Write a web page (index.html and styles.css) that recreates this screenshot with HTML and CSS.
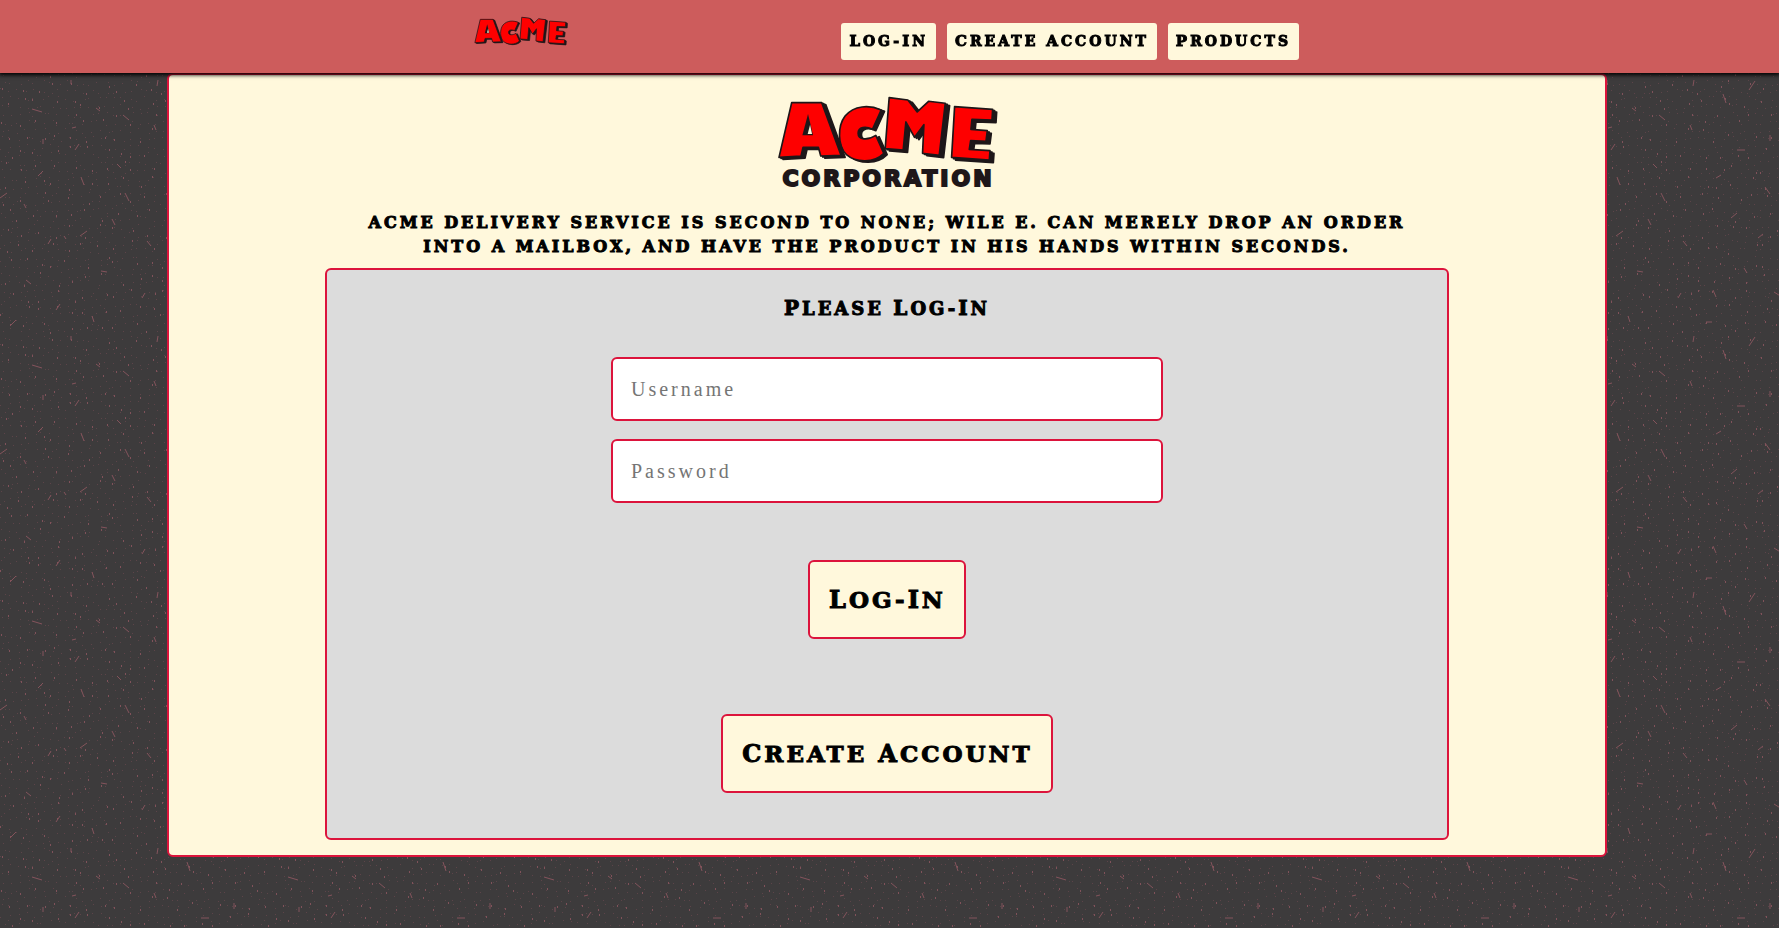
FILE: index.html
```
<!DOCTYPE html>
<html lang="en">
<head>
<meta charset="utf-8">
<title>ACME Corporation</title>
<link rel="stylesheet" href="styles.css">
</head>
<body>
<svg class="backdrop" aria-hidden="true">
  <defs>
    <pattern id="speckle" width="256" height="256" patternUnits="userSpaceOnUse">
      <path id="dim" fill="#5c4449"/>
      <path id="bright" fill="#80525a"/>
      <path fill="none" stroke="#84535b" stroke-width="1" d="M32 109l10 3M96 108l4 3M123 115l6 5M72 128l4-1M43 139v5M75 150l4-6M38 176l5-5M81 177l3 8M117 164l4 4M125 193l4 8M0 198l7-5M24 204l2 4M112 219l3 6M80 236l7-5M64 236l2 3M48 244l3-5M147 241l4 5M154 125l2 5M71 80v4M158 80l-1 6M187 94l3 9M213 90l6-9M177 34l3 7M238 36l8 5M201 150h8M229 187l5 7M195 218l6-5M234 135v6M26 24l5 4M101 15l6 1M60 48l-4 6M142 42l3-5M208 12l3 5M170 66h6M92 60l2 6M10 70l6-6M222 238l5-4M180 178l5-3M245 214l-2 7"/>
    </pattern>
    <path id="mark-c" d="M366 92L340 150C320 140 297 142 297 162C297 182 325 184 350 168L374 222C345 252 290 250 262 226C235 200 235 140 258 110C285 78 330 76 366 92Z"/>
    <path id="mark-a" d="M98 70H188L246 228L185 230L178 204H132L126 230L60 234Z"/>
    <path id="mark-m" d="M390 55L446 62L474 98L508 66L558 72L540 228L490 222L494 136L466 174L440 128L432 212L378 208Z"/>
    <path id="mark-e" d="M586 82L700 90L698 122L638 120L635 150L684 154L680 186L634 184L630 210L692 214L690 242L577 234Z"/>
    <symbol id="acme" viewBox="54 48 662 208">
      <g stroke="#1e1719" stroke-width="5" stroke-linejoin="round">
        <use href="#mark-c" fill="#1e1719" transform="translate(10 4)"/>
        <use href="#mark-c" fill="#fe0000"/>
        <g fill="#1e1719">
          <use href="#mark-a" transform="translate(6 3)"/>
          <use href="#mark-a" transform="translate(12 6)"/>
        </g>
        <use href="#mark-a" fill="#fe0000"/>
        <path d="M147 104L162 168H130Z" fill="#1e1719" stroke="none"/>
        <path d="M153 136L159 164H146Z" fill="#fff8dc" stroke="none"/>
        <g fill="#1e1719">
          <use href="#mark-m" transform="translate(6 3)"/>
          <use href="#mark-m" transform="translate(13 7)"/>
        </g>
        <use href="#mark-m" fill="#fe0000"/>
        <g fill="#1e1719">
          <use href="#mark-e" transform="translate(6 4)"/>
          <use href="#mark-e" transform="translate(12 8)"/>
        </g>
        <use href="#mark-e" fill="#fe0000"/>
      </g>
    </symbol>
  </defs>
  <rect width="100%" height="100%" fill="url(#speckle)"/>
</svg>

<header class="topbar">
  <a class="brand" href="#" aria-label="ACME home"><svg class="brand-mark"><use href="#acme"/></svg></a>
  <nav class="links">
    <a href="#"><b>L</b>og-<b>I</b>n</a>
    <a href="#"><b>C</b>reate <b>A</b>ccount</a>
    <a href="#"><b>P</b>roducts</a>
  </nav>
</header>

<main class="page">
  <div class="card">
    <div class="logo">
      <svg class="logo-mark"><use href="#acme"/></svg>
      <div class="logo-name">Corporation</div>
    </div>
    <p class="tagline">ACME delivery service is second to none; Wile E. can merely drop an order into a mailbox, and have the product in his hands within seconds.</p>
    <form class="login">
      <h1><b>P</b>lease <b>L</b>og-<b>I</b>n</h1>
      <input type="text" placeholder="Username" aria-label="Username">
      <input type="password" placeholder="Password" aria-label="Password">
      <button type="button" class="submit"><b>L</b>og-<b>I</b>n</button>
      <button type="button" class="create"><b>C</b>reate <b>A</b>ccount</button>
    </form>
  </div>
</main>
<script src="speckle.js"></script>
</body>
</html>
```
FILE: styles.css
```
* { box-sizing: border-box; }
body {
  margin: 0;
  background: #3d3b3c;
  color: #000;
  font-family: "DejaVu Serif", serif;
  font-weight: bold;
  letter-spacing: 3px;
}
.backdrop { position: fixed; inset: 0; width: 100%; height: 100%; z-index: -1; }

.topbar {
  position: relative;
  display: flex;
  justify-content: space-between;
  height: 73px;
  padding: 16px 480px 0 474px;
  background: #cd5c5c;
  box-shadow: 0 1px 4px 1px #000;
}
.brand-mark { display: block; width: 94px; height: 30px; }
.links { display: flex; gap: 11px; padding-top: 7px; align-items: flex-start; }
.links a {
  padding: 0 8px;
  border-radius: 3px;
  background: #fff8dc;
  color: #000;
  font-size: 14px;
  line-height: 37px;
  text-decoration: none;
  text-transform: uppercase;
  white-space: nowrap;
  -webkit-text-stroke: 1px #000;
}
.links b { font-size: 15px; }

.page { padding-right: 5px; }
.card {
  width: 100%;
  max-width: 1440px;
  margin: 0 auto;
  padding: 20px 0 15px;
  border: 2px solid #dc143c;
  border-radius: 6px;
  background: #fff8dc;
  display: flex;
  flex-direction: column;
  align-items: center;
}
.logo { display: flex; flex-direction: column; align-items: center; }
.logo-mark { width: 221px; height: 70px; }
.logo-name {
  color: #1e1719;
  padding: 2px 0 0 3px;
  font: bold 22px/24px "DejaVu Sans", sans-serif;
  letter-spacing: 3px;
  text-transform: uppercase;
  -webkit-text-stroke: 2px #1e1719;
}
.tagline {
  width: 75%;
  margin: 20px 0 9px;
  font-size: 16px;
  line-height: 24px;
  text-align: center;
  text-transform: uppercase;
  -webkit-text-stroke: 1px #000;
}
.login {
  width: 78%;
  padding: 26px 0 45px;
  border: 2px solid #dc143c;
  border-radius: 6px;
  background: #dcdcdc;
  display: flex;
  flex-direction: column;
  align-items: center;
  box-sizing: content-box;
}
h1 {
  margin: 0 0 36px;
  font-size: 18px;
  line-height: 25px;
  text-transform: uppercase;
  -webkit-text-stroke: 1px #000;
}
h1 b { font-size: 20px; }
input {
  width: 100%;
  max-width: 552px;
  height: 64px;
  margin-bottom: 18px;
  padding: 0 18px;
  border: 2px solid #dc143c;
  border-radius: 6px;
  background: #fff;
  font: 20px "Liberation Serif", serif;
  letter-spacing: 3px;
}
input::placeholder { color: #757575; }
button {
  height: 79px;
  padding: 0 18px 0 19px;
  border: 2px solid #dc143c;
  border-radius: 6px;
  background: #fff8dc;
  color: #000;
  font: bold 23px "DejaVu Serif", serif;
  letter-spacing: 3px;
  text-transform: uppercase;
  -webkit-text-stroke: 1px #000;
}
button b { font-size: 24px; }
.submit { margin: 39px 0 75px; }
```
FILE: speckle.js
```
// Fills the backdrop tile with evenly scattered dots.
let seed = 7;
function rand() {
  seed = (seed * 16807) % 2147483647;
  return seed / 2147483647;
}
function scatter(step, width, height) {
  let d = '';
  for (let y = 0; y < 256; y += step) {
    for (let x = 0; x < 256; x += step) {
      const px = Math.floor(x + rand() * (step - 2));
      const py = Math.floor(y + rand() * (step - 2));
      d += `M${px} ${py}h${width}v${height}h-${width}z`;
    }
  }
  return d;
}
document.getElementById('dim').setAttribute('d', scatter(8, 1, 1));
document.getElementById('bright').setAttribute('d', scatter(16, 1, 2));
```
